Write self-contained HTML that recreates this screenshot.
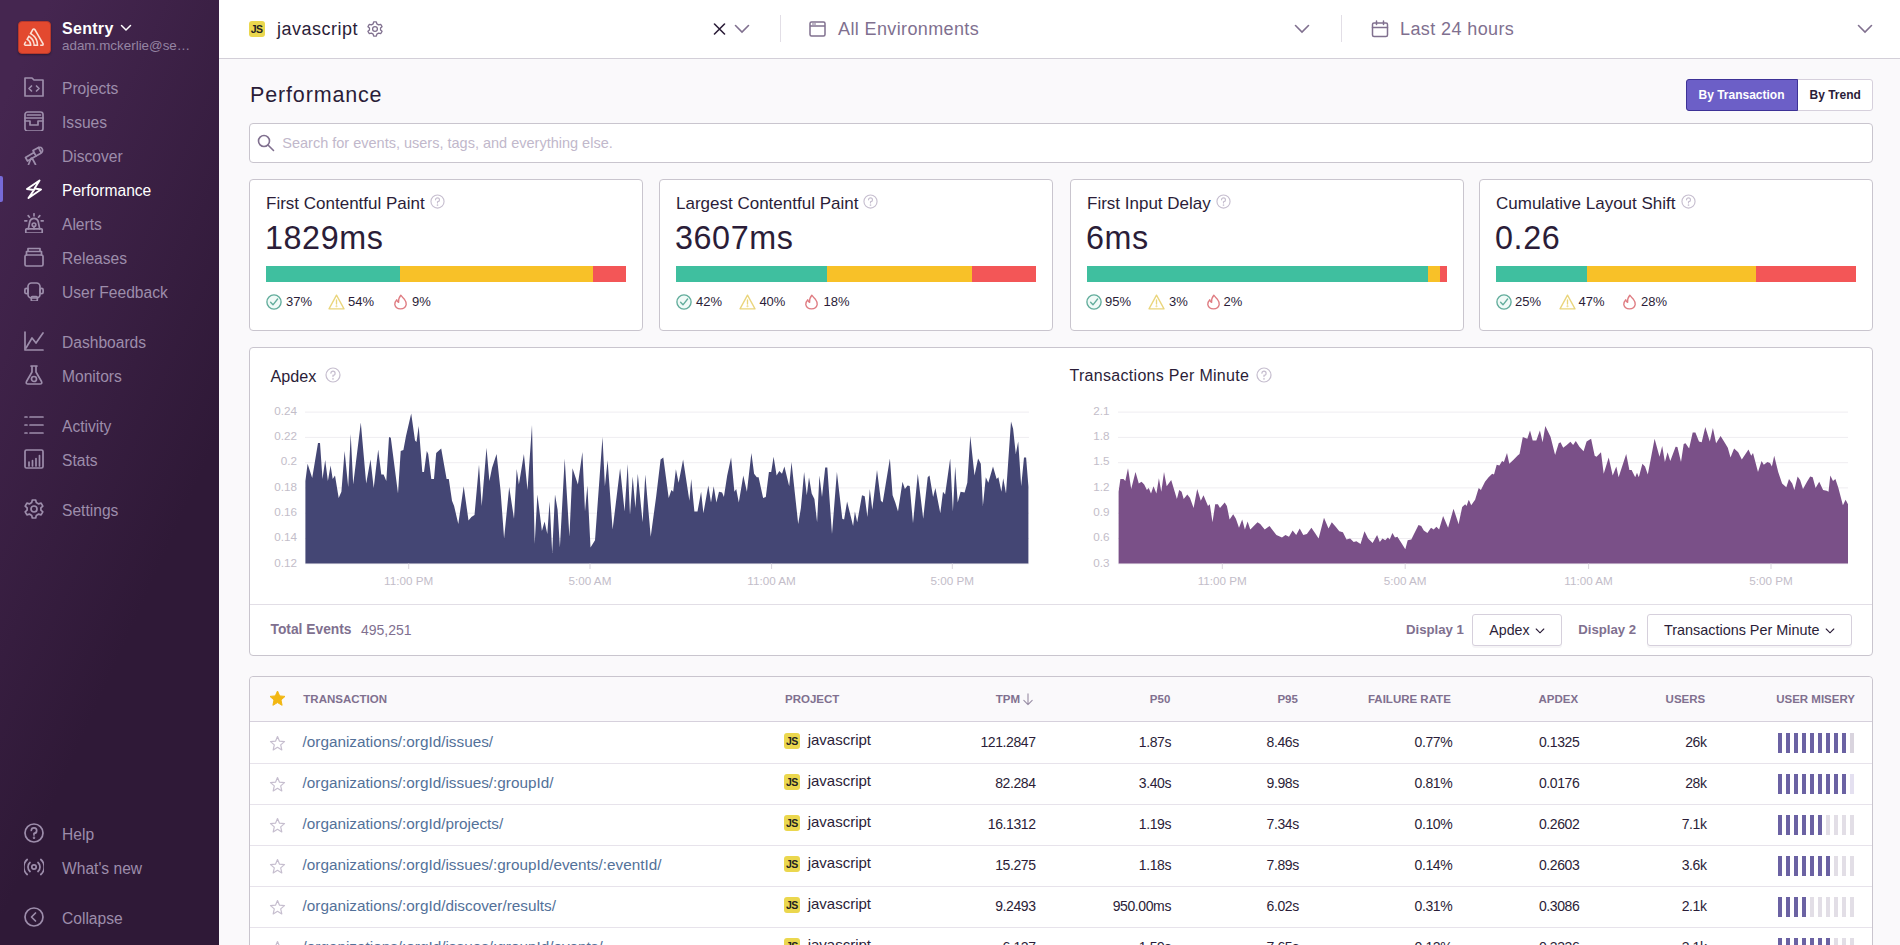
<!DOCTYPE html>
<html><head><meta charset="utf-8">
<style>
*{box-sizing:border-box;margin:0;padding:0}
html,body{width:1900px;height:945px;overflow:hidden;background:#faf9fb;font-family:"Liberation Sans",sans-serif;color:#2b1d38}
.a{position:absolute}
.t{position:absolute;white-space:nowrap;line-height:1}
#sb{position:absolute;left:0;top:0;width:219px;height:945px;background:linear-gradient(294.17deg,#2f1937 35.57%,#452650 92.42%)}
.nl{position:absolute;left:62px;font-size:15.6px;line-height:1;color:#9d8dab;white-space:nowrap}
.ni{position:absolute;left:24px;width:20px;height:20px;fill:none;stroke:#9d8dab;stroke-width:1.7;stroke-linecap:round;stroke-linejoin:round}
#hdr{position:absolute;left:219px;top:0;width:1681px;height:59px;background:#fff;border-bottom:1px solid #d3cfd8}
.card{position:absolute;top:179px;height:152px;width:394px;background:#fff;border:1px solid #c9c5ce;border-radius:4px}
.panel{position:absolute;background:#fff;border:1px solid #c9c5ce;border-radius:4px}
.ct{font-size:17px;color:#2b1d38}
.big{font-size:32.3px;color:#2b1d38;letter-spacing:0.6px}
.lg{font-size:13px;color:#2b1d38}
.ax{font-size:11.7px;color:#c3bdc9}
.th{font-size:11.5px;font-weight:bold;color:#80708f}
.td{font-size:14px;color:#2b1d38;letter-spacing:-0.4px}
.lk{font-size:15.3px;color:#537199}
.js{position:absolute;width:16px;height:16px;border-radius:3px;background:#ebd74e;font-weight:bold;font-size:10.5px;line-height:17px;text-align:center;color:#222;letter-spacing:-0.6px}
</style></head>
<body>
<div id="sb">
  <div class="a" style="left:17.5px;top:20.5px;width:33px;height:33px;background:#e3492f;border:1px solid #b8392c;border-radius:4px;box-shadow:0 1px 2px rgba(0,0,0,0.35)"></div>
  <svg class="a" style="left:18px;top:21px" width="32" height="32" viewBox="0 0 32 32"><path transform="translate(5.7,7.2) scale(0.405)" fill="#fbe0d6" d="M29,2.26a4.670,4.670,0,0,0-8,0L14.42,13.53A32.21,32.21,0,0,1,32.17,40.19H27.55A27.68,27.68,0,0,0,12.09,17.47L6,28a15.92,15.92,0,0,1,9.230,12.17H4.62A.76.76,0,0,1,4,39.06l2.940-5a10.740,10.740,0,0,0-3.360-1.9l-2.910,5a4.540,4.540,0,0,0,1.690,6.24A4.660,4.660,0,0,0,4.620,44H19.150a19.400,19.400,0,0,0-8-17.310l2.310-4A23.870,23.870,0,0,1,23.760,44H36.070a35.880,35.880,0,0,0-16.410-31.800l4.670-8a.77.77,0,0,1,1.050-.27c.53.29,20.290,34.770,20.660,35.170a.76.76,0,0,1-.68,1.130H40.600q.09,1.910,0,3.810h4.780A4.590,4.590,0,0,0,50,39.430a4.490,4.490,0,0,0-.62-2.280Z"/></svg>
  <div class="t" style="left:62px;top:20.8px;font-size:16px;font-weight:bold;color:#fff;letter-spacing:0.3px">Sentry</div>
  <svg class="a" style="left:119.5px;top:24px" width="12" height="8" viewBox="0 0 12 8" fill="none" stroke="#fff" stroke-width="1.5" stroke-linecap="round"><path d="M1.5 1.5 L6 6 L10.5 1.5"/></svg>
  <div class="t" style="left:62px;top:38.5px;font-size:13.4px;color:#9585a3">adam.mckerlie@se…</div>
  <div class="a" style="left:0;top:176px;width:3px;height:26px;background:#776ad8;border-radius:0 2px 2px 0"></div>

  <!-- icons -->
  <svg class="ni" style="top:77px" viewBox="0 0 20 20"><path d="M1 19 V1 H8 L10 3 H19 V19 Z"/><path d="M7.5 9 L5 11.5 L7.5 14 M12.5 9 L15 11.5 L12.5 14"/></svg>
  <svg class="ni" style="top:111px" viewBox="0 0 20 20"><rect x="1" y="1" width="18" height="19" rx="2.5"/><path d="M3.5 4 H16.5 M1 7 H19 M1 10 H6 V14 H14 V10 H19"/></svg>
  <svg class="ni" style="top:145px" viewBox="0 0 20 20"><path d="M1.5 12.5 L3.5 16 L12 11 L10 7.5 Z"/><path d="M10 7.5 L9 5.5 L14.5 2.5 Q17.5 1.5 18.5 4.5 Q19 7 16.5 8.5 L12 11"/><path d="M14.5 2.5 L17 7.5"/><path d="M7 13.5 L4.5 19.5 M8 13 L11.5 19.5"/></svg>
  <svg class="ni" style="top:179px;stroke:#fff;stroke-width:1.9" viewBox="0 0 20 20"><path d="M15.5 1.5 L3 10 L10 11 L4.5 19 L17 10.5 L10.5 9.5 Z"/></svg>
  <svg class="ni" style="top:213px" viewBox="0 0 20 20"><path d="M4.3 15.8 L5.8 8.5 Q6.5 5.3 10 5.3 Q13.5 5.3 14.2 8.5 L15.7 15.8"/><rect x="1.8" y="15.8" width="16.4" height="4.2" rx="0.8"/><circle cx="10" cy="11.8" r="1.8"/><path d="M10 13.6 V15.8 M10 0.8 V2.8 M4.2 2.6 L5.5 4.2 M15.8 2.6 L14.5 4.2 M0.8 7.8 H2.8 M17.2 7.8 H19.2"/></svg>
  <svg class="ni" style="top:247px" viewBox="0 0 20 20"><rect x="1" y="8" width="18" height="11" rx="1.5"/><path d="M2.5 8 V4.5 H17.5 V8 M4 4.5 V1.5 H16 V4.5"/></svg>
  <svg class="ni" style="top:281px" viewBox="0 0 20 20"><rect x="4" y="2" width="12" height="15" rx="3.5"/><rect x="0.9" y="7.3" width="3.1" height="5.4" rx="1.5"/><rect x="16" y="7.3" width="3.1" height="5.4" rx="1.5"/><rect x="7.3" y="15.6" width="6" height="4.4" rx="1"/></svg>
  <svg class="ni" style="top:331px" viewBox="0 0 20 20"><path d="M1 1 V19 H19"/><path d="M2 17 L8 7 L12 12 L19 2"/></svg>
  <svg class="ni" style="top:365px" viewBox="0 0 20 20"><path d="M7 1 H13 M8 1 V7 L2.5 16.5 Q1.5 19 4 19 H16 Q18.5 19 17.5 16.5 L12 7 V1"/><circle cx="10" cy="14" r="2.5"/></svg>
  <svg class="ni" style="top:415px" viewBox="0 0 20 20"><path d="M1 2 H3 M6 2 H19 M1 10 H3 M6 10 H19 M1 18 H3 M6 18 H19"/></svg>
  <svg class="ni" style="top:449px" viewBox="0 0 20 20"><rect x="1" y="1" width="18" height="18" rx="1.5"/><path d="M5 17 V13 M8.5 17 V11.5 M12 17 V9.5 M15.5 17 V6.5"/></svg>
  <svg class="ni" style="top:499px" viewBox="0 0 20 20"><path d="M8.3 1 H11.7 L12.3 3.6 L14.6 4.9 L17.1 4.1 L18.8 7.1 L16.9 8.8 V11.2 L18.8 12.9 L17.1 15.9 L14.6 15.1 L12.3 16.4 L11.7 19 H8.3 L7.7 16.4 L5.4 15.1 L2.9 15.9 L1.2 12.9 L3.1 11.2 V8.8 L1.2 7.1 L2.9 4.1 L5.4 4.9 L7.7 3.6 Z"/><circle cx="10" cy="10" r="3"/></svg>
  <svg class="ni" style="top:823px" viewBox="0 0 20 20"><circle cx="10" cy="10" r="9"/><path d="M7.3 7.5 A2.7 2.7 0 1 1 10 10.3 V12"/><circle cx="10" cy="14.8" r="0.4" fill="#9585a3"/></svg>
  <svg class="ni" style="top:857px" viewBox="0 0 20 20"><circle cx="10" cy="10" r="2.2"/><path d="M6 5.5 A6 6 0 0 0 6 14.5 M14 5.5 A6 6 0 0 1 14 14.5 M3.2 2.5 A10 10 0 0 0 3.2 17.5 M16.8 2.5 A10 10 0 0 1 16.8 17.5"/></svg>
  <svg class="ni" style="top:907px" viewBox="0 0 20 20"><circle cx="10" cy="10" r="9"/><path d="M11.5 6 L7.5 10 L11.5 14"/></svg>

  <div class="nl" style="top:80.5px">Projects</div>
  <div class="nl" style="top:114.5px">Issues</div>
  <div class="nl" style="top:148.5px">Discover</div>
  <div class="nl" style="top:182.5px;color:#fff">Performance</div>
  <div class="nl" style="top:216.5px">Alerts</div>
  <div class="nl" style="top:250.5px">Releases</div>
  <div class="nl" style="top:284.5px">User Feedback</div>
  <div class="nl" style="top:334.5px">Dashboards</div>
  <div class="nl" style="top:368.5px">Monitors</div>
  <div class="nl" style="top:418.5px">Activity</div>
  <div class="nl" style="top:452.5px">Stats</div>
  <div class="nl" style="top:502.5px">Settings</div>
  <div class="nl" style="top:826.5px">Help</div>
  <div class="nl" style="top:860.5px">What's new</div>
  <div class="nl" style="top:910.5px">Collapse</div>
</div>

<div id="hdr"></div>
<div class="js" style="left:248.5px;top:20.5px">JS</div>
<div class="t" style="left:277px;top:19.5px;font-size:18px;letter-spacing:0.5px;color:#2b1d38">javascript</div>
<svg class="a" style="left:367px;top:21px" width="16" height="16" viewBox="0 0 20 20" fill="none" stroke="#80708f" stroke-width="1.6" stroke-linejoin="round"><path d="M8.3 1 H11.7 L12.3 3.6 L14.6 4.9 L17.1 4.1 L18.8 7.1 L16.9 8.8 V11.2 L18.8 12.9 L17.1 15.9 L14.6 15.1 L12.3 16.4 L11.7 19 H8.3 L7.7 16.4 L5.4 15.1 L2.9 15.9 L1.2 12.9 L3.1 11.2 V8.8 L1.2 7.1 L2.9 4.1 L5.4 4.9 L7.7 3.6 Z"/><circle cx="10" cy="10" r="3"/></svg>
<svg class="a" style="left:713px;top:23px" width="13" height="12" viewBox="0 0 13 12" fill="none" stroke="#2b1d38" stroke-width="1.6" stroke-linecap="round"><path d="M1.5 1 L11.5 11 M11.5 1 L1.5 11"/></svg>
<svg class="a" style="left:734px;top:24px" width="16" height="10" viewBox="0 0 16 10" fill="none" stroke="#80708f" stroke-width="1.6" stroke-linecap="round"><path d="M1.5 1.5 L8 8 L14.5 1.5"/></svg>
<div class="a" style="left:779.5px;top:15px;width:1px;height:27px;background:#e2dee6"></div>
<svg class="a" style="left:809px;top:21px" width="17" height="16" viewBox="0 0 17 16" fill="none" stroke="#80708f" stroke-width="1.5"><rect x="1" y="1" width="15" height="14" rx="1.5"/><path d="M1 5 H16"/><path d="M3 3 H7" stroke-width="1"/></svg>
<div class="t" style="left:838px;top:19.8px;font-size:18px;letter-spacing:0.38px;color:#80708f">All Environments</div>
<svg class="a" style="left:1294px;top:24px" width="16" height="10" viewBox="0 0 16 10" fill="none" stroke="#80708f" stroke-width="1.6" stroke-linecap="round"><path d="M1.5 1.5 L8 8 L14.5 1.5"/></svg>
<div class="a" style="left:1341px;top:15px;width:1px;height:27px;background:#e2dee6"></div>
<svg class="a" style="left:1371px;top:20px" width="18" height="18" viewBox="0 0 18 18" fill="none" stroke="#80708f" stroke-width="1.5" stroke-linecap="round"><rect x="1.5" y="3" width="15" height="13.5" rx="1.5"/><path d="M1.5 7.5 H16.5 M5.5 1 V4.5 M12.5 1 V4.5"/></svg>
<div class="t" style="left:1400px;top:19.8px;font-size:18px;letter-spacing:0.4px;color:#80708f">Last 24 hours</div>
<svg class="a" style="left:1857px;top:24px" width="16" height="10" viewBox="0 0 16 10" fill="none" stroke="#80708f" stroke-width="1.6" stroke-linecap="round"><path d="M1.5 1.5 L8 8 L14.5 1.5"/></svg>

<div class="t" style="left:250px;top:84.6px;font-size:21.5px;letter-spacing:0.85px;color:#2b1d38">Performance</div>
<div class="a" style="left:1686px;top:79px;width:187px;height:32px;border:1px solid #d6d0dc;border-radius:3px;background:#fff"></div>
<div class="a" style="left:1686px;top:79px;width:112px;height:32px;background:#6c5fc7;border:1px solid #3d3296;border-radius:3px 0 0 3px"></div>
<div class="t" style="left:1698.5px;top:88.8px;font-size:12px;font-weight:bold;color:#fff">By Transaction</div>
<div class="t" style="left:1809.5px;top:88.8px;font-size:12px;font-weight:bold;color:#2b1d38">By Trend</div>

<div class="panel" style="left:249px;top:123px;width:1624px;height:40px"></div>
<svg class="a" style="left:257px;top:134px" width="18" height="18" viewBox="0 0 18 18" fill="none" stroke="#80708f" stroke-width="1.6" stroke-linecap="round"><circle cx="7" cy="7" r="5.5"/><path d="M11 11 L16.5 16.5"/></svg>
<div class="t" style="left:282.3px;top:136px;font-size:14.5px;color:#c1b8cb">Search for events, users, tags, and everything else.</div>

<div class="card" style="left:249px"></div>
<div class="t ct" style="left:266px;top:195.1px">First Contentful Paint</div>
<svg class="a" style="left:430px;top:194px" width="15" height="15" viewBox="0 0 16 16" fill="none" stroke="#c6becf" stroke-width="1.2" stroke-linecap="round"><circle cx="8" cy="8" r="7"/><path d="M5.9 6.2 A2.1 2.1 0 1 1 8 8.3 V9.6"/><circle cx="8" cy="11.8" r="0.3" fill="#c6becf"/></svg>
<div class="t big" style="left:265px;top:221.6px">1829ms</div>
<div class="a" style="left:266px;top:266px;width:134px;height:16px;background:#3fbf9f"></div>
<div class="a" style="left:400px;top:266px;width:193px;height:16px;background:#f8c128"></div>
<div class="a" style="left:593px;top:266px;width:33px;height:16px;background:#f35657"></div>
<svg class="a" style="left:265.5px;top:294px" width="16" height="16" viewBox="0 0 16 16" fill="none" stroke="#62ad9c" stroke-width="1.35" stroke-linecap="round" stroke-linejoin="round"><circle cx="8" cy="8" r="7.1" fill="#f0faf7"/><path d="M4.6 8.2 L7 10.8 L11.6 5"/></svg>
<div class="t lg" style="left:286px;top:294.8px">37%</div>
<svg class="a" style="left:327.5px;top:294px" width="17" height="16" viewBox="0 0 17 16" fill="none" stroke="#ead57c" stroke-width="1.35" stroke-linejoin="round" stroke-linecap="round"><path d="M8.5 1.2 L16 14.8 H1 Z"/><path d="M8.5 6 V10"/><circle cx="8.5" cy="12.3" r="0.3" fill="#ead57c"/></svg>
<div class="t lg" style="left:348px;top:294.8px">54%</div>
<svg class="a" style="left:392.9px;top:294px" width="15" height="16" viewBox="0 0 15 16" fill="none" stroke="#df7c82" stroke-width="1.35" stroke-linejoin="round" stroke-linecap="round"><path d="M7.8 1.2 Q9.8 3.8 11.6 5.6 Q13.4 7.8 13.2 10.6 A5.8 5.2 0 0 1 1.8 10.6 Q1.8 7.8 3.8 5.8 Q4.3 7.9 5.6 8.4 Q5.2 4.3 7.8 1.2 Z"/></svg>
<div class="t lg" style="left:412px;top:294.8px">9%</div>
<div class="card" style="left:659px"></div>
<div class="t ct" style="left:676px;top:195.1px">Largest Contentful Paint</div>
<svg class="a" style="left:863px;top:194px" width="15" height="15" viewBox="0 0 16 16" fill="none" stroke="#c6becf" stroke-width="1.2" stroke-linecap="round"><circle cx="8" cy="8" r="7"/><path d="M5.9 6.2 A2.1 2.1 0 1 1 8 8.3 V9.6"/><circle cx="8" cy="11.8" r="0.3" fill="#c6becf"/></svg>
<div class="t big" style="left:675px;top:221.6px">3607ms</div>
<div class="a" style="left:676px;top:266px;width:151px;height:16px;background:#3fbf9f"></div>
<div class="a" style="left:827px;top:266px;width:145px;height:16px;background:#f8c128"></div>
<div class="a" style="left:972px;top:266px;width:64px;height:16px;background:#f35657"></div>
<svg class="a" style="left:675.5px;top:294px" width="16" height="16" viewBox="0 0 16 16" fill="none" stroke="#62ad9c" stroke-width="1.35" stroke-linecap="round" stroke-linejoin="round"><circle cx="8" cy="8" r="7.1" fill="#f0faf7"/><path d="M4.6 8.2 L7 10.8 L11.6 5"/></svg>
<div class="t lg" style="left:696px;top:294.8px">42%</div>
<svg class="a" style="left:739.0px;top:294px" width="17" height="16" viewBox="0 0 17 16" fill="none" stroke="#ead57c" stroke-width="1.35" stroke-linejoin="round" stroke-linecap="round"><path d="M8.5 1.2 L16 14.8 H1 Z"/><path d="M8.5 6 V10"/><circle cx="8.5" cy="12.3" r="0.3" fill="#ead57c"/></svg>
<div class="t lg" style="left:759.4px;top:294.8px">40%</div>
<svg class="a" style="left:804.2px;top:294px" width="15" height="16" viewBox="0 0 15 16" fill="none" stroke="#df7c82" stroke-width="1.35" stroke-linejoin="round" stroke-linecap="round"><path d="M7.8 1.2 Q9.8 3.8 11.6 5.6 Q13.4 7.8 13.2 10.6 A5.8 5.2 0 0 1 1.8 10.6 Q1.8 7.8 3.8 5.8 Q4.3 7.9 5.6 8.4 Q5.2 4.3 7.8 1.2 Z"/></svg>
<div class="t lg" style="left:823.5px;top:294.8px">18%</div>
<div class="card" style="left:1070px"></div>
<div class="t ct" style="left:1087px;top:195.1px">First Input Delay</div>
<svg class="a" style="left:1216px;top:194px" width="15" height="15" viewBox="0 0 16 16" fill="none" stroke="#c6becf" stroke-width="1.2" stroke-linecap="round"><circle cx="8" cy="8" r="7"/><path d="M5.9 6.2 A2.1 2.1 0 1 1 8 8.3 V9.6"/><circle cx="8" cy="11.8" r="0.3" fill="#c6becf"/></svg>
<div class="t big" style="left:1086px;top:221.6px">6ms</div>
<div class="a" style="left:1087px;top:266px;width:341px;height:16px;background:#3fbf9f"></div>
<div class="a" style="left:1428px;top:266px;width:12px;height:16px;background:#f8c128"></div>
<div class="a" style="left:1440px;top:266px;width:7px;height:16px;background:#f35657"></div>
<svg class="a" style="left:1086.0px;top:294px" width="16" height="16" viewBox="0 0 16 16" fill="none" stroke="#62ad9c" stroke-width="1.35" stroke-linecap="round" stroke-linejoin="round"><circle cx="8" cy="8" r="7.1" fill="#f0faf7"/><path d="M4.6 8.2 L7 10.8 L11.6 5"/></svg>
<div class="t lg" style="left:1105px;top:294.8px">95%</div>
<svg class="a" style="left:1147.5px;top:294px" width="17" height="16" viewBox="0 0 17 16" fill="none" stroke="#ead57c" stroke-width="1.35" stroke-linejoin="round" stroke-linecap="round"><path d="M8.5 1.2 L16 14.8 H1 Z"/><path d="M8.5 6 V10"/><circle cx="8.5" cy="12.3" r="0.3" fill="#ead57c"/></svg>
<div class="t lg" style="left:1169px;top:294.8px">3%</div>
<svg class="a" style="left:1205.5px;top:294px" width="15" height="16" viewBox="0 0 15 16" fill="none" stroke="#df7c82" stroke-width="1.35" stroke-linejoin="round" stroke-linecap="round"><path d="M7.8 1.2 Q9.8 3.8 11.6 5.6 Q13.4 7.8 13.2 10.6 A5.8 5.2 0 0 1 1.8 10.6 Q1.8 7.8 3.8 5.8 Q4.3 7.9 5.6 8.4 Q5.2 4.3 7.8 1.2 Z"/></svg>
<div class="t lg" style="left:1223.6px;top:294.8px">2%</div>
<div class="card" style="left:1479px"></div>
<div class="t ct" style="left:1496px;top:195.1px">Cumulative Layout Shift</div>
<svg class="a" style="left:1681px;top:194px" width="15" height="15" viewBox="0 0 16 16" fill="none" stroke="#c6becf" stroke-width="1.2" stroke-linecap="round"><circle cx="8" cy="8" r="7"/><path d="M5.9 6.2 A2.1 2.1 0 1 1 8 8.3 V9.6"/><circle cx="8" cy="11.8" r="0.3" fill="#c6becf"/></svg>
<div class="t big" style="left:1495px;top:221.6px">0.26</div>
<div class="a" style="left:1496px;top:266px;width:91px;height:16px;background:#3fbf9f"></div>
<div class="a" style="left:1587px;top:266px;width:169px;height:16px;background:#f8c128"></div>
<div class="a" style="left:1756px;top:266px;width:100px;height:16px;background:#f35657"></div>
<svg class="a" style="left:1495.5px;top:294px" width="16" height="16" viewBox="0 0 16 16" fill="none" stroke="#62ad9c" stroke-width="1.35" stroke-linecap="round" stroke-linejoin="round"><circle cx="8" cy="8" r="7.1" fill="#f0faf7"/><path d="M4.6 8.2 L7 10.8 L11.6 5"/></svg>
<div class="t lg" style="left:1515px;top:294.8px">25%</div>
<svg class="a" style="left:1559.0px;top:294px" width="17" height="16" viewBox="0 0 17 16" fill="none" stroke="#ead57c" stroke-width="1.35" stroke-linejoin="round" stroke-linecap="round"><path d="M8.5 1.2 L16 14.8 H1 Z"/><path d="M8.5 6 V10"/><circle cx="8.5" cy="12.3" r="0.3" fill="#ead57c"/></svg>
<div class="t lg" style="left:1578.6px;top:294.8px">47%</div>
<svg class="a" style="left:1621.5px;top:294px" width="15" height="16" viewBox="0 0 15 16" fill="none" stroke="#df7c82" stroke-width="1.35" stroke-linejoin="round" stroke-linecap="round"><path d="M7.8 1.2 Q9.8 3.8 11.6 5.6 Q13.4 7.8 13.2 10.6 A5.8 5.2 0 0 1 1.8 10.6 Q1.8 7.8 3.8 5.8 Q4.3 7.9 5.6 8.4 Q5.2 4.3 7.8 1.2 Z"/></svg>
<div class="t lg" style="left:1641px;top:294.8px">28%</div>

<div class="panel" style="left:249px;top:347px;width:1624px;height:309px"></div>
<svg class="a" style="left:0;top:0" width="1900" height="945">
<line x1="305" x2="1029" y1="412.1" y2="412.1" stroke="#efedf1" stroke-width="1"/>
<line x1="305" x2="1029" y1="437.4" y2="437.4" stroke="#efedf1" stroke-width="1"/>
<line x1="305" x2="1029" y1="462.7" y2="462.7" stroke="#efedf1" stroke-width="1"/>
<line x1="305" x2="1029" y1="487.9" y2="487.9" stroke="#efedf1" stroke-width="1"/>
<line x1="305" x2="1029" y1="513.2" y2="513.2" stroke="#efedf1" stroke-width="1"/>
<line x1="305" x2="1029" y1="538.5" y2="538.5" stroke="#efedf1" stroke-width="1"/>
<line x1="305" x2="1029" y1="563.8" y2="563.8" stroke="#efedf1" stroke-width="1"/>
<line x1="1118" x2="1848" y1="412.1" y2="412.1" stroke="#efedf1" stroke-width="1"/>
<line x1="1118" x2="1848" y1="437.4" y2="437.4" stroke="#efedf1" stroke-width="1"/>
<line x1="1118" x2="1848" y1="462.7" y2="462.7" stroke="#efedf1" stroke-width="1"/>
<line x1="1118" x2="1848" y1="487.9" y2="487.9" stroke="#efedf1" stroke-width="1"/>
<line x1="1118" x2="1848" y1="513.2" y2="513.2" stroke="#efedf1" stroke-width="1"/>
<line x1="1118" x2="1848" y1="538.5" y2="538.5" stroke="#efedf1" stroke-width="1"/>
<line x1="1118" x2="1848" y1="563.8" y2="563.8" stroke="#efedf1" stroke-width="1"/>
<path d="M305.4 563.5 L305.4 481.0 L307.6 463.8 L312.2 478.0 L318.0 443.0 L320.0 443.0 L322.5 479.0 L325.2 460.0 L327.9 481.0 L330.6 465.6 L332.7 479.0 L335.0 475.5 L338.7 498.0 L341.4 491.7 L344.6 451.0 L348.2 487.0 L350.7 434.0 L353.2 484.5 L360.8 422.5 L366.2 483.6 L370.5 459.4 L373.7 488.0 L378.2 449.5 L381.3 474.6 L383.6 474.6 L386.3 481.0 L389.0 437.0 L390.8 437.8 L398.0 493.5 L400.7 451.0 L403.4 450.0 L406.0 436.0 L411.2 413.5 L415.0 440.5 L416.5 442.0 L418.7 426.0 L422.3 472.0 L424.0 472.0 L426.8 451.0 L428.2 454.0 L431.3 479.0 L434.0 479.0 L436.2 453.0 L441.2 448.6 L446.6 479.0 L448.8 479.0 L452.0 500.7 L454.1 506.0 L458.3 524.0 L463.7 486.3 L468.5 520.5 L471.4 517.0 L474.5 515.0 L479.0 464.7 L481.7 506.0 L486.5 447.7 L489.4 481.0 L492.0 468.0 L496.6 454.0 L500.5 490.0 L504.1 538.5 L509.2 487.0 L514.0 518.7 L516.7 469.0 L518.9 484.5 L523.9 454.0 L527.5 490.0 L532.0 425.0 L534.7 544.0 L537.4 494.4 L541.9 531.0 L544.6 521.4 L547.3 534.0 L549.6 501.6 L552.2 553.0 L555.0 494.4 L557.6 509.7 L559.9 547.5 L564.7 458.5 L569.4 536.7 L572.5 468.3 L577.9 484.5 L582.4 452.0 L585.0 511.5 L587.4 485.4 L590.5 547.5 L595.0 540.3 L602.5 437.0 L604.9 486.3 L607.6 460.3 L612.6 529.5 L620.1 468.3 L624.6 511.5 L627.7 464.0 L630.0 515.0 L632.7 476.4 L635.4 508.0 L637.8 473.7 L642.6 522.3 L645.3 474.6 L650.7 536.7 L656.1 497.0 L660.6 459.4 L663.3 457.6 L668.7 498.0 L671.4 490.0 L673.2 491.7 L675.9 469.2 L678.6 482.7 L683.1 459.4 L689.4 500.7 L691.2 479.0 L694.4 511.5 L697.5 511.5 L701.1 491.7 L703.4 513.3 L708.3 485.4 L711.0 502.5 L713.7 486.3 L716.4 502.5 L719.0 491.7 L722.1 492.6 L723.9 497.0 L727.2 475.5 L731.1 457.6 L734.4 491.7 L736.2 489.0 L738.8 502.5 L743.3 475.5 L746.9 491.7 L751.4 453.0 L754.1 473.7 L756.8 477.3 L758.6 477.3 L763.1 498.0 L765.8 497.0 L768.9 472.0 L771.2 472.0 L773.6 456.7 L776.6 475.5 L779.3 471.0 L782.0 473.7 L784.4 466.5 L789.2 486.3 L791.5 462.0 L798.2 524.0 L800.9 508.0 L804.1 472.0 L806.8 495.3 L809.0 477.3 L811.7 493.5 L814.4 499.0 L817.1 522.3 L819.4 475.5 L822.0 497.0 L825.2 467.4 L827.3 467.4 L832.0 534.0 L836.9 472.0 L842.3 518.7 L844.1 519.6 L847.1 501.6 L853.1 526.0 L854.9 511.5 L857.2 522.3 L862.0 495.3 L864.7 496.2 L867.4 517.0 L869.8 489.0 L872.3 509.7 L877.0 470.0 L880.9 500.7 L882.7 502.5 L889.9 458.5 L892.6 495.3 L895.3 502.5 L898.0 511.5 L902.5 481.8 L904.9 489.0 L907.6 485.4 L909.7 486.0 L913.0 523.2 L917.8 473.7 L923.2 518.7 L927.7 477.3 L929.5 475.5 L933.1 497.0 L935.4 488.0 L940.3 513.3 L943.0 491.7 L945.1 494.4 L950.2 458.5 L952.9 511.5 L955.2 466.5 L957.7 502.5 L960.6 491.7 L964.6 492.6 L967.3 482.7 L970.3 436.0 L974.5 475.5 L978.1 458.5 L980.8 463.8 L982.9 506.0 L985.8 477.3 L988.3 482.7 L993.0 466.5 L996.6 479.0 L998.4 477.3 L1001.4 491.7 L1003.2 478.2 L1006.0 493.5 L1011.0 421.6 L1013.1 428.8 L1015.8 454.0 L1018.2 441.4 L1021.2 486.3 L1024.0 457.6 L1026.1 457.6 L1028.4 486.3 L1028.4 563.5 Z" fill="#444674"/>
<path d="M1118.6 563.5 L1118.6 491.7 L1120.4 479.0 L1123.5 479.0 L1125.3 481.0 L1128.0 468.3 L1131.2 489.0 L1135.5 472.0 L1138.8 483.6 L1141.5 481.8 L1144.2 484.5 L1146.9 490.0 L1148.7 488.0 L1151.0 493.5 L1153.5 486.3 L1156.4 493.5 L1158.9 478.2 L1161.3 491.7 L1164.0 472.0 L1166.7 486.3 L1171.2 480.0 L1176.9 499.0 L1179.2 490.0 L1181.6 491.7 L1183.7 499.0 L1187.3 494.4 L1190.0 498.0 L1193.6 508.0 L1197.2 489.0 L1200.8 500.7 L1203.5 495.3 L1208.0 506.0 L1209.8 504.3 L1212.5 522.3 L1215.2 504.3 L1217.9 504.3 L1220.0 508.0 L1224.7 502.5 L1226.9 506.0 L1229.6 519.6 L1233.2 514.2 L1235.9 518.7 L1239.0 527.7 L1242.2 519.6 L1244.9 529.5 L1247.6 521.4 L1250.3 529.5 L1257.5 522.3 L1260.2 524.0 L1264.7 529.5 L1269.5 526.0 L1276.4 535.0 L1282.0 537.6 L1285.4 535.0 L1289.0 536.7 L1292.6 530.4 L1296.2 535.0 L1299.7 528.6 L1303.3 535.0 L1306.9 534.0 L1311.4 527.7 L1315.0 533.0 L1318.6 538.5 L1324.0 517.8 L1328.5 528.6 L1331.8 522.3 L1335.7 526.8 L1339.3 531.3 L1342.9 532.2 L1346.5 539.4 L1350.1 538.5 L1353.7 542.0 L1356.4 541.2 L1360.5 544.0 L1364.5 531.3 L1368.1 538.5 L1372.6 543.0 L1377.1 535.0 L1379.8 542.0 L1382.5 538.5 L1385.2 540.3 L1387.9 537.6 L1389.7 539.4 L1392.4 533.0 L1395.0 537.6 L1397.4 536.7 L1401.4 543.0 L1405.3 549.3 L1407.7 540.3 L1411.3 539.4 L1414.0 534.0 L1418.5 525.0 L1421.2 526.0 L1423.8 530.4 L1427.4 533.0 L1431.0 527.7 L1433.7 529.5 L1436.4 526.8 L1439.1 529.5 L1443.1 516.0 L1448.1 527.7 L1453.5 508.8 L1458.6 524.0 L1462.2 507.0 L1465.2 504.3 L1466.5 506.0 L1468.8 499.8 L1471.2 505.2 L1475.1 499.8 L1478.7 488.0 L1480.9 490.0 L1485.0 481.8 L1488.6 477.3 L1492.2 473.7 L1494.0 474.6 L1496.7 464.7 L1499.4 465.6 L1502.1 461.0 L1503.9 462.0 L1507.0 453.0 L1509.3 463.8 L1513.8 459.4 L1517.4 455.8 L1519.5 454.0 L1522.8 436.9 L1527.3 438.7 L1530.0 430.6 L1532.7 440.5 L1536.3 440.5 L1539.9 430.6 L1542.6 442.3 L1545.3 426.0 L1550.6 436.9 L1555.1 454.9 L1558.7 443.2 L1560.5 442.3 L1563.2 447.7 L1566.8 445.0 L1570.4 441.7 L1573.1 445.0 L1575.8 441.0 L1579.4 446.8 L1583.6 451.3 L1586.6 441.4 L1591.1 438.7 L1594.7 455.8 L1596.5 456.7 L1601.0 452.2 L1603.7 473.7 L1608.7 457.6 L1612.7 475.5 L1616.3 466.5 L1618.6 477.3 L1626.2 454.0 L1629.4 470.0 L1631.6 470.0 L1635.2 477.3 L1637.0 472.8 L1638.8 477.3 L1642.4 463.8 L1645.0 466.5 L1647.8 474.6 L1654.6 438.7 L1659.5 456.7 L1662.2 445.9 L1664.9 462.0 L1667.6 452.2 L1670.3 461.0 L1675.6 446.8 L1677.4 447.0 L1681.0 462.0 L1683.7 444.0 L1685.5 443.2 L1689.1 448.6 L1692.7 432.4 L1695.4 432.4 L1699.0 441.4 L1701.7 442.3 L1705.3 427.0 L1709.8 441.4 L1712.9 427.9 L1716.1 443.2 L1720.6 436.0 L1725.1 443.2 L1727.8 447.7 L1730.5 457.6 L1734.1 448.6 L1738.2 452.2 L1741.8 459.4 L1748.5 449.5 L1751.2 455.8 L1753.0 453.0 L1758.0 472.0 L1761.6 461.0 L1763.8 464.7 L1767.4 462.0 L1770.0 463.0 L1771.9 466.5 L1774.2 455.8 L1778.2 472.0 L1782.1 483.6 L1786.3 487.2 L1789.0 479.0 L1792.2 483.6 L1794.4 490.0 L1797.6 476.4 L1800.1 480.0 L1803.0 489.0 L1807.0 481.8 L1810.2 476.4 L1812.7 477.3 L1815.6 488.0 L1819.2 481.8 L1823.1 490.0 L1826.7 490.8 L1828.5 491.7 L1830.3 475.5 L1833.0 481.0 L1835.4 479.0 L1838.4 488.0 L1842.9 505.2 L1845.6 499.8 L1848.0 504.3 L1848.0 563.5 Z" fill="#7a5088"/>
<line x1="408.7" x2="408.7" y1="563.5" y2="569" stroke="#d9d5dd" stroke-width="1"/>
<line x1="590" x2="590" y1="563.5" y2="569" stroke="#d9d5dd" stroke-width="1"/>
<line x1="771.6" x2="771.6" y1="563.5" y2="569" stroke="#d9d5dd" stroke-width="1"/>
<line x1="952.3" x2="952.3" y1="563.5" y2="569" stroke="#d9d5dd" stroke-width="1"/>
<line x1="1222.3" x2="1222.3" y1="563.5" y2="569" stroke="#d9d5dd" stroke-width="1"/>
<line x1="1405.2" x2="1405.2" y1="563.5" y2="569" stroke="#d9d5dd" stroke-width="1"/>
<line x1="1588.6" x2="1588.6" y1="563.5" y2="569" stroke="#d9d5dd" stroke-width="1"/>
<line x1="1771" x2="1771" y1="563.5" y2="569" stroke="#d9d5dd" stroke-width="1"/>
</svg>
<div class="t" style="left:270.5px;top:367.5px;font-size:16.2px;color:#2b1d38">Apdex</div>
<svg class="a" style="left:325px;top:367px" width="16" height="16" viewBox="0 0 16 16" fill="none" stroke="#c6becf" stroke-width="1.2" stroke-linecap="round"><circle cx="8" cy="8" r="7"/><path d="M5.9 6.2 A2.1 2.1 0 1 1 8 8.3 V9.6"/><circle cx="8" cy="11.8" r="0.3" fill="#c6becf"/></svg>
<div class="t" style="left:1069.5px;top:367.7px;font-size:16px;color:#2b1d38;letter-spacing:0.3px">Transactions Per Minute</div>
<svg class="a" style="left:1256px;top:367px" width="16" height="16" viewBox="0 0 16 16" fill="none" stroke="#c6becf" stroke-width="1.2" stroke-linecap="round"><circle cx="8" cy="8" r="7"/><path d="M5.9 6.2 A2.1 2.1 0 1 1 8 8.3 V9.6"/><circle cx="8" cy="11.8" r="0.3" fill="#c6becf"/></svg>
<div class="t ax" style="right:1603px;top:404.8px">0.24</div>
<div class="t ax" style="right:1603px;top:430.1px">0.22</div>
<div class="t ax" style="right:1603px;top:455.4px">0.2</div>
<div class="t ax" style="right:1603px;top:480.6px">0.18</div>
<div class="t ax" style="right:1603px;top:505.9px">0.16</div>
<div class="t ax" style="right:1603px;top:531.2px">0.14</div>
<div class="t ax" style="right:1603px;top:556.5px">0.12</div>
<div class="t ax" style="right:790.5px;top:404.8px">2.1</div>
<div class="t ax" style="right:790.5px;top:430.1px">1.8</div>
<div class="t ax" style="right:790.5px;top:455.4px">1.5</div>
<div class="t ax" style="right:790.5px;top:480.6px">1.2</div>
<div class="t ax" style="right:790.5px;top:505.9px">0.9</div>
<div class="t ax" style="right:790.5px;top:531.2px">0.6</div>
<div class="t ax" style="right:790.5px;top:556.5px">0.3</div>
<div class="t ax" style="left:384.1px;top:574.9px">11:00 PM</div>
<div class="t ax" style="left:568.5px;top:574.9px">5:00 AM</div>
<div class="t ax" style="left:747.3px;top:574.9px">11:00 AM</div>
<div class="t ax" style="left:930.5px;top:574.9px">5:00 PM</div>
<div class="t ax" style="left:1197.7px;top:574.9px">11:00 PM</div>
<div class="t ax" style="left:1383.7px;top:574.9px">5:00 AM</div>
<div class="t ax" style="left:1564.3px;top:574.9px">11:00 AM</div>
<div class="t ax" style="left:1749.2px;top:574.9px">5:00 PM</div>
<div class="a" style="left:250px;top:604px;width:1622px;height:1px;background:#e2dee6"></div>
<div class="t" style="left:270.5px;top:622.8px;font-size:13.8px;font-weight:bold;color:#80708f">Total Events</div>
<div class="t" style="left:361px;top:622.8px;font-size:14px;color:#80708f">495,251</div>
<div class="t" style="left:1406px;top:622.8px;font-size:13.2px;font-weight:bold;color:#80708f">Display 1</div>
<div class="a" style="left:1472px;top:614px;width:90px;height:32px;border:1px solid #d6d0dc;border-radius:3px;background:#fff;box-shadow:0 2px 0 rgba(37,11,54,0.04)"></div>
<div class="t" style="left:1489.3px;top:622.8px;font-size:14.2px;color:#2b1d38">Apdex</div>
<svg class="a" style="left:1535px;top:627.5px" width="10" height="6" viewBox="0 0 10 6" fill="none" stroke="#2b1d38" stroke-width="1.1" stroke-linecap="round"><path d="M1.2 1 L5 4.8 L8.8 1"/></svg>
<div class="t" style="left:1578.2px;top:622.8px;font-size:13.2px;font-weight:bold;color:#80708f">Display 2</div>
<div class="a" style="left:1647px;top:614px;width:205px;height:32px;border:1px solid #d6d0dc;border-radius:3px;background:#fff;box-shadow:0 2px 0 rgba(37,11,54,0.04)"></div>
<div class="t" style="left:1664px;top:622.8px;font-size:14.4px;color:#2b1d38">Transactions Per Minute</div>
<svg class="a" style="left:1825px;top:627.5px" width="10" height="6" viewBox="0 0 10 6" fill="none" stroke="#2b1d38" stroke-width="1.1" stroke-linecap="round"><path d="M1.2 1 L5 4.8 L8.8 1"/></svg>

<div class="panel" style="left:249px;top:676px;width:1624px;height:290px;overflow:hidden"></div>
<div class="a" style="left:250px;top:677px;width:1622px;height:45px;background:#faf9fb;border-bottom:1px solid #d6d0dc;border-radius:4px 4px 0 0"></div>
<svg class="a" style="left:269px;top:690px" width="17" height="17" viewBox="0 0 17 17"><path d="M8.5 1 L10.7 5.9 L16 6.4 L12 10 L13.1 15.3 L8.5 12.6 L3.9 15.3 L5 10 L1 6.4 L6.3 5.9 Z" fill="#f2b712" stroke="#f2b712" stroke-width="1" stroke-linejoin="round"/></svg>
<div class="t th" style="left:303.3px;top:694px">TRANSACTION</div>
<div class="t th" style="left:785px;top:694px">PROJECT</div>
<div class="t th" style="right:880px;top:694px">TPM</div>
<svg class="a" style="left:1022px;top:693px" width="12" height="13" viewBox="0 0 12 14" fill="none" stroke="#9a8fa6" stroke-width="1.2" stroke-linecap="round" stroke-linejoin="round"><path d="M6 1 V12.5 M1.5 8 L6 12.5 L10.5 8"/></svg>
<div class="t th" style="right:729.7px;top:694px">P50</div>
<div class="t th" style="right:602.1px;top:694px">P95</div>
<div class="t th" style="right:449.2px;top:694px">FAILURE RATE</div>
<div class="t th" style="right:321.9px;top:694px">APDEX</div>
<div class="t th" style="right:194.8px;top:694px">USERS</div>
<div class="t th" style="right:45.0px;top:694px">USER MISERY</div>
<svg class="a" style="left:269px;top:734.5px" width="17" height="17" viewBox="0 0 17 17"><path d="M8.5 1.5 L10.5 6.2 L15.5 6.6 L11.7 9.9 L12.8 14.9 L8.5 12.3 L4.2 14.9 L5.3 9.9 L1.5 6.6 L6.5 6.2 Z" fill="none" stroke="#c6becf" stroke-width="1.2" stroke-linejoin="round"/></svg>
<div class="t lk" style="left:302.6px;top:733.6px">/organizations/:orgId/issues/</div>
<div class="js" style="left:783.8px;top:733px">JS</div>
<div class="t" style="left:807.7px;top:731.7px;font-size:15px;color:#2b1d38">javascript</div>
<div class="t td" style="right:864.4px;top:734.9px">121.2847</div>
<div class="t td" style="right:729.0px;top:734.9px">1.87s</div>
<div class="t td" style="right:601.2px;top:734.9px">8.46s</div>
<div class="t td" style="right:447.8px;top:734.9px">0.77%</div>
<div class="t td" style="right:320.7px;top:734.9px">0.1325</div>
<div class="t td" style="right:193.4px;top:734.9px">26k</div>
<div class="a" style="left:1778.0px;top:733px;width:4px;height:20px;background:#6b62a3"></div>
<div class="a" style="left:1786.0px;top:733px;width:4px;height:20px;background:#6b62a3"></div>
<div class="a" style="left:1794.0px;top:733px;width:4px;height:20px;background:#6b62a3"></div>
<div class="a" style="left:1802.0px;top:733px;width:4px;height:20px;background:#6b62a3"></div>
<div class="a" style="left:1810.0px;top:733px;width:4px;height:20px;background:#6b62a3"></div>
<div class="a" style="left:1818.0px;top:733px;width:4px;height:20px;background:#6b62a3"></div>
<div class="a" style="left:1826.0px;top:733px;width:4px;height:20px;background:#6b62a3"></div>
<div class="a" style="left:1834.0px;top:733px;width:4px;height:20px;background:#6b62a3"></div>
<div class="a" style="left:1842.0px;top:733px;width:4px;height:20px;background:#6b62a3"></div>
<div class="a" style="left:1850.0px;top:733px;width:4px;height:20px;background:#d9d4de"></div>
<div class="a" style="left:250px;top:763px;width:1622px;height:1px;background:#e7e3eb"></div>
<svg class="a" style="left:269px;top:775.5px" width="17" height="17" viewBox="0 0 17 17"><path d="M8.5 1.5 L10.5 6.2 L15.5 6.6 L11.7 9.9 L12.8 14.9 L8.5 12.3 L4.2 14.9 L5.3 9.9 L1.5 6.6 L6.5 6.2 Z" fill="none" stroke="#c6becf" stroke-width="1.2" stroke-linejoin="round"/></svg>
<div class="t lk" style="left:302.6px;top:774.6px">/organizations/:orgId/issues/:groupId/</div>
<div class="js" style="left:783.8px;top:774px">JS</div>
<div class="t" style="left:807.7px;top:772.7px;font-size:15px;color:#2b1d38">javascript</div>
<div class="t td" style="right:864.4px;top:775.9px">82.284</div>
<div class="t td" style="right:729.0px;top:775.9px">3.40s</div>
<div class="t td" style="right:601.2px;top:775.9px">9.98s</div>
<div class="t td" style="right:447.8px;top:775.9px">0.81%</div>
<div class="t td" style="right:320.7px;top:775.9px">0.0176</div>
<div class="t td" style="right:193.4px;top:775.9px">28k</div>
<div class="a" style="left:1778.0px;top:774px;width:4px;height:20px;background:#6b62a3"></div>
<div class="a" style="left:1786.0px;top:774px;width:4px;height:20px;background:#6b62a3"></div>
<div class="a" style="left:1794.0px;top:774px;width:4px;height:20px;background:#6b62a3"></div>
<div class="a" style="left:1802.0px;top:774px;width:4px;height:20px;background:#6b62a3"></div>
<div class="a" style="left:1810.0px;top:774px;width:4px;height:20px;background:#6b62a3"></div>
<div class="a" style="left:1818.0px;top:774px;width:4px;height:20px;background:#6b62a3"></div>
<div class="a" style="left:1826.0px;top:774px;width:4px;height:20px;background:#6b62a3"></div>
<div class="a" style="left:1834.0px;top:774px;width:4px;height:20px;background:#6b62a3"></div>
<div class="a" style="left:1842.0px;top:774px;width:4px;height:20px;background:#6b62a3"></div>
<div class="a" style="left:1850.0px;top:774px;width:4px;height:20px;background:#e4e0f0"></div>
<div class="a" style="left:250px;top:804px;width:1622px;height:1px;background:#e7e3eb"></div>
<svg class="a" style="left:269px;top:816.5px" width="17" height="17" viewBox="0 0 17 17"><path d="M8.5 1.5 L10.5 6.2 L15.5 6.6 L11.7 9.9 L12.8 14.9 L8.5 12.3 L4.2 14.9 L5.3 9.9 L1.5 6.6 L6.5 6.2 Z" fill="none" stroke="#c6becf" stroke-width="1.2" stroke-linejoin="round"/></svg>
<div class="t lk" style="left:302.6px;top:815.6px">/organizations/:orgId/projects/</div>
<div class="js" style="left:783.8px;top:815px">JS</div>
<div class="t" style="left:807.7px;top:813.7px;font-size:15px;color:#2b1d38">javascript</div>
<div class="t td" style="right:864.4px;top:816.9px">16.1312</div>
<div class="t td" style="right:729.0px;top:816.9px">1.19s</div>
<div class="t td" style="right:601.2px;top:816.9px">7.34s</div>
<div class="t td" style="right:447.8px;top:816.9px">0.10%</div>
<div class="t td" style="right:320.7px;top:816.9px">0.2602</div>
<div class="t td" style="right:193.4px;top:816.9px">7.1k</div>
<div class="a" style="left:1778.0px;top:815px;width:4px;height:20px;background:#6b62a3"></div>
<div class="a" style="left:1786.0px;top:815px;width:4px;height:20px;background:#6b62a3"></div>
<div class="a" style="left:1794.0px;top:815px;width:4px;height:20px;background:#6b62a3"></div>
<div class="a" style="left:1802.0px;top:815px;width:4px;height:20px;background:#6b62a3"></div>
<div class="a" style="left:1810.0px;top:815px;width:4px;height:20px;background:#6b62a3"></div>
<div class="a" style="left:1818.0px;top:815px;width:4px;height:20px;background:#6b62a3"></div>
<div class="a" style="left:1826.0px;top:815px;width:4px;height:20px;background:#e2dee6"></div>
<div class="a" style="left:1834.0px;top:815px;width:4px;height:20px;background:#e2dee6"></div>
<div class="a" style="left:1842.0px;top:815px;width:4px;height:20px;background:#e2dee6"></div>
<div class="a" style="left:1850.0px;top:815px;width:4px;height:20px;background:#e2dee6"></div>
<div class="a" style="left:250px;top:845px;width:1622px;height:1px;background:#e7e3eb"></div>
<svg class="a" style="left:269px;top:857.5px" width="17" height="17" viewBox="0 0 17 17"><path d="M8.5 1.5 L10.5 6.2 L15.5 6.6 L11.7 9.9 L12.8 14.9 L8.5 12.3 L4.2 14.9 L5.3 9.9 L1.5 6.6 L6.5 6.2 Z" fill="none" stroke="#c6becf" stroke-width="1.2" stroke-linejoin="round"/></svg>
<div class="t lk" style="left:302.6px;top:856.6px">/organizations/:orgId/issues/:groupId/events/:eventId/</div>
<div class="js" style="left:783.8px;top:856px">JS</div>
<div class="t" style="left:807.7px;top:854.7px;font-size:15px;color:#2b1d38">javascript</div>
<div class="t td" style="right:864.4px;top:857.9px">15.275</div>
<div class="t td" style="right:729.0px;top:857.9px">1.18s</div>
<div class="t td" style="right:601.2px;top:857.9px">7.89s</div>
<div class="t td" style="right:447.8px;top:857.9px">0.14%</div>
<div class="t td" style="right:320.7px;top:857.9px">0.2603</div>
<div class="t td" style="right:193.4px;top:857.9px">3.6k</div>
<div class="a" style="left:1778.0px;top:856px;width:4px;height:20px;background:#6b62a3"></div>
<div class="a" style="left:1786.0px;top:856px;width:4px;height:20px;background:#6b62a3"></div>
<div class="a" style="left:1794.0px;top:856px;width:4px;height:20px;background:#6b62a3"></div>
<div class="a" style="left:1802.0px;top:856px;width:4px;height:20px;background:#6b62a3"></div>
<div class="a" style="left:1810.0px;top:856px;width:4px;height:20px;background:#6b62a3"></div>
<div class="a" style="left:1818.0px;top:856px;width:4px;height:20px;background:#6b62a3"></div>
<div class="a" style="left:1826.0px;top:856px;width:4px;height:20px;background:#6b62a3"></div>
<div class="a" style="left:1834.0px;top:856px;width:4px;height:20px;background:#e2dee6"></div>
<div class="a" style="left:1842.0px;top:856px;width:4px;height:20px;background:#e2dee6"></div>
<div class="a" style="left:1850.0px;top:856px;width:4px;height:20px;background:#e2dee6"></div>
<div class="a" style="left:250px;top:886px;width:1622px;height:1px;background:#e7e3eb"></div>
<svg class="a" style="left:269px;top:898.5px" width="17" height="17" viewBox="0 0 17 17"><path d="M8.5 1.5 L10.5 6.2 L15.5 6.6 L11.7 9.9 L12.8 14.9 L8.5 12.3 L4.2 14.9 L5.3 9.9 L1.5 6.6 L6.5 6.2 Z" fill="none" stroke="#c6becf" stroke-width="1.2" stroke-linejoin="round"/></svg>
<div class="t lk" style="left:302.6px;top:897.6px">/organizations/:orgId/discover/results/</div>
<div class="js" style="left:783.8px;top:897px">JS</div>
<div class="t" style="left:807.7px;top:895.7px;font-size:15px;color:#2b1d38">javascript</div>
<div class="t td" style="right:864.4px;top:898.9px">9.2493</div>
<div class="t td" style="right:729.0px;top:898.9px">950.00ms</div>
<div class="t td" style="right:601.2px;top:898.9px">6.02s</div>
<div class="t td" style="right:447.8px;top:898.9px">0.31%</div>
<div class="t td" style="right:320.7px;top:898.9px">0.3086</div>
<div class="t td" style="right:193.4px;top:898.9px">2.1k</div>
<div class="a" style="left:1778.0px;top:897px;width:4px;height:20px;background:#6b62a3"></div>
<div class="a" style="left:1786.0px;top:897px;width:4px;height:20px;background:#6b62a3"></div>
<div class="a" style="left:1794.0px;top:897px;width:4px;height:20px;background:#6b62a3"></div>
<div class="a" style="left:1802.0px;top:897px;width:4px;height:20px;background:#6b62a3"></div>
<div class="a" style="left:1810.0px;top:897px;width:4px;height:20px;background:#e2dee6"></div>
<div class="a" style="left:1818.0px;top:897px;width:4px;height:20px;background:#e2dee6"></div>
<div class="a" style="left:1826.0px;top:897px;width:4px;height:20px;background:#e2dee6"></div>
<div class="a" style="left:1834.0px;top:897px;width:4px;height:20px;background:#e2dee6"></div>
<div class="a" style="left:1842.0px;top:897px;width:4px;height:20px;background:#e2dee6"></div>
<div class="a" style="left:1850.0px;top:897px;width:4px;height:20px;background:#e2dee6"></div>
<div class="a" style="left:250px;top:927px;width:1622px;height:1px;background:#e7e3eb"></div>
<svg class="a" style="left:269px;top:939.5px" width="17" height="17" viewBox="0 0 17 17"><path d="M8.5 1.5 L10.5 6.2 L15.5 6.6 L11.7 9.9 L12.8 14.9 L8.5 12.3 L4.2 14.9 L5.3 9.9 L1.5 6.6 L6.5 6.2 Z" fill="none" stroke="#c6becf" stroke-width="1.2" stroke-linejoin="round"/></svg>
<div class="t lk" style="left:302.6px;top:938.6px">/organizations/:orgId/issues/:groupId/events/</div>
<div class="js" style="left:783.8px;top:938px">JS</div>
<div class="t" style="left:807.7px;top:936.7px;font-size:15px;color:#2b1d38">javascript</div>
<div class="t td" style="right:864.4px;top:939.9px">6.127</div>
<div class="t td" style="right:729.0px;top:939.9px">1.59s</div>
<div class="t td" style="right:601.2px;top:939.9px">7.65s</div>
<div class="t td" style="right:447.8px;top:939.9px">0.12%</div>
<div class="t td" style="right:320.7px;top:939.9px">0.3336</div>
<div class="t td" style="right:193.4px;top:939.9px">3.1k</div>
<div class="a" style="left:1778.0px;top:938px;width:4px;height:20px;background:#6b62a3"></div>
<div class="a" style="left:1786.0px;top:938px;width:4px;height:20px;background:#6b62a3"></div>
<div class="a" style="left:1794.0px;top:938px;width:4px;height:20px;background:#6b62a3"></div>
<div class="a" style="left:1802.0px;top:938px;width:4px;height:20px;background:#6b62a3"></div>
<div class="a" style="left:1810.0px;top:938px;width:4px;height:20px;background:#6b62a3"></div>
<div class="a" style="left:1818.0px;top:938px;width:4px;height:20px;background:#6b62a3"></div>
<div class="a" style="left:1826.0px;top:938px;width:4px;height:20px;background:#6b62a3"></div>
<div class="a" style="left:1834.0px;top:938px;width:4px;height:20px;background:#e2dee6"></div>
<div class="a" style="left:1842.0px;top:938px;width:4px;height:20px;background:#e2dee6"></div>
<div class="a" style="left:1850.0px;top:938px;width:4px;height:20px;background:#e2dee6"></div>
</body></html>
